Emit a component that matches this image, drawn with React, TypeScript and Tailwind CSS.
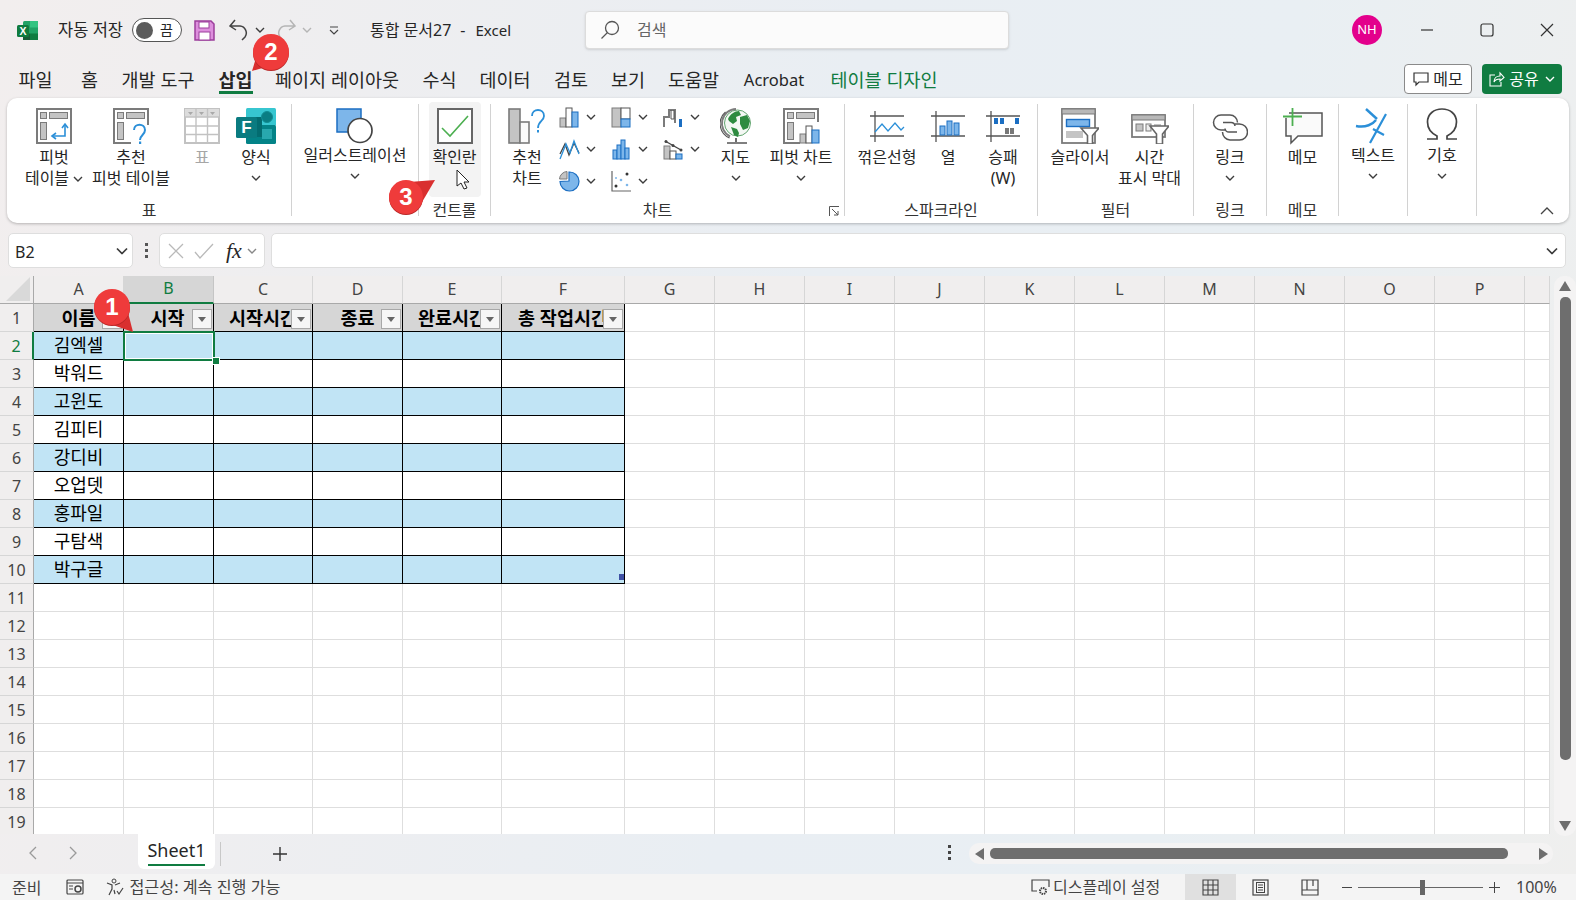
import type { ReactNode } from "react";

const GR = "#7b7b7b";
const LG = "#c4c4c4";
const BL = "#1b6ec2";
const LB = "#7db6ea";

function Chevron({ className = "", color = "#3c3c3c" }: { className?: string; color?: string }) {
  return (
    <svg width="10" height="6" viewBox="0 0 10 6" className={className}>
      <path d="M1 1l4 4 4-4" fill="none" stroke={color} strokeWidth="1.4" />
    </svg>
  );
}

function PivotBase({ extra, h = 36 }: { extra?: ReactNode; h?: number }) {
  return (
    <svg width="38" height={h} viewBox="0 0 38 36">
      <rect x="2" y="1" width="34" height="34" fill="#fff" stroke={GR} strokeWidth="2" />
      <rect x="5.5" y="4.5" width="6" height="6" fill={LG} stroke={GR} />
      <rect x="14.5" y="4.5" width="18" height="6" fill={LG} stroke={GR} />
      <rect x="5.5" y="14.5" width="6" height="17" fill={LG} stroke={GR} />
      {extra}
    </svg>
  );
}

function PivotIcon() {
  return (
    <PivotBase
      extra={
        <g fill="none" stroke="#2b8fd8" strokeWidth="1.6">
          <path d="M30 17v11H18" />
          <path d="M27 20l3-4 3 4M21 25l-4 3 4 3" />
        </g>
      }
    />
  );
}

function RecommendPivotIcon() {
  return (
    <PivotBase
      extra={
        <g>
          <rect x="19" y="17" width="19" height="19" fill="#fff" />
          <path d="M22 22c0-7 11-7 11 0 0 5-5 5-5 10" fill="none" stroke="#2b8fd8" strokeWidth="2" />
          <rect x="27" y="33.5" width="2.2" height="2.5" fill="#2b8fd8" />
        </g>
      }
    />
  );
}

function TableIcon() {
  return (
    <svg width="36" height="36" viewBox="0 0 36 36">
      <rect x="1" y="1" width="34" height="34" fill="#fff" stroke="#c2c2c2" strokeWidth="2" />
      <rect x="1" y="1" width="34" height="8" fill="#dcdcdc" />
      <path d="M12 1v34M23.500 1v34M1 9h34M1 18h34M1 26.500h34" stroke="#c2c2c2" strokeWidth="1.4" />
      <path d="M4 4h5l-2.500 3zM15 4h5l-2.500 3zM26 4h5l-2.500 3z" fill="#a9a9a9" />
    </svg>
  );
}

function FormsIcon() {
  return (
    <svg width="40" height="36" viewBox="0 0 40 36">
      <rect x="10" y="0" width="30" height="18" rx="1.500" fill="#37c6d0" />
      <rect x="10" y="17" width="30" height="19" rx="1.500" fill="#038387" />
      <rect x="10" y="9" width="16" height="20" fill="#036c70" />
      <circle cx="31" cy="9" r="5.500" fill="#0a7e83" stroke="#118d93" />
      <rect x="26" y="21" width="10" height="10" fill="#28a8ae" />
      <rect x="0" y="9" width="21" height="21" rx="1.500" fill="#0a7b80" />
      <text x="10.500" y="25" textAnchor="middle" fontSize="17" fontWeight="700" fill="#fff" fontFamily="Liberation Sans, sans-serif">F</text>
    </svg>
  );
}

function IllustrationIcon() {
  return (
    <svg width="38" height="36" viewBox="0 0 38 36">
      <rect x="1" y="1" width="24" height="23" fill={LB} stroke={BL} strokeWidth="1.500" />
      <circle cx="24" cy="22.500" r="12" fill="#fff" stroke="#444" strokeWidth="1.700" />
    </svg>
  );
}

function CheckIcon() {
  return (
    <svg width="36" height="36" viewBox="0 0 36 36">
      <rect x="1" y="1" width="34" height="34" fill="#fff" stroke="#666" strokeWidth="2" />
      <path d="M5 20l8 8L31 8" fill="none" stroke="#4caf50" strokeWidth="1.600" />
    </svg>
  );
}

function RecChartIcon() {
  return (
    <svg width="38" height="36" viewBox="0 0 38 36">
      <rect x="1" y="1" width="11" height="34" fill={LG} stroke={GR} strokeWidth="1.600" />
      <rect x="12" y="14" width="9" height="21" fill="#fafafa" stroke={GR} strokeWidth="1.600" />
      <path d="M24 8c0-8 12-8 12 0 0 5-6 5-6 12" fill="none" stroke="#2b8fd8" strokeWidth="1.800" />
      <rect x="29" y="22" width="2" height="2.500" fill="#2b8fd8" />
    </svg>
  );
}

const smallIcons: ReactNode[] = [
  <g key="1">
    <rect x="1" y="11" width="6" height="9" fill={LG} stroke={GR} />
    <rect x="7" y="1" width="6" height="19" fill="#fff" stroke="#555" />
    <rect x="13" y="5" width="6" height="15" fill={LB} stroke={BL} />
  </g>,
  <g key="2">
    <rect x="1" y="1" width="9" height="19" fill={LG} stroke={GR} />
    <rect x="10" y="1" width="9" height="11" fill="#fff" stroke="#555" />
    <rect x="10" y="12" width="9" height="8" fill={LB} stroke={BL} />
  </g>,
  <g key="3" fill="none">
    <path d="M1 20v-10h5V3h6v13" stroke={GR} strokeWidth="2" />
    <path d="M8 3v9h3V3" stroke="#555" />
    <rect x="16" y="12" width="3" height="8" fill={BL} />
  </g>,
  <g key="4" fill="none" strokeWidth="1.300">
    <path d="M1 15l5-10 4 11 5-12 5 10" stroke="#444" />
    <path d="M1 20l6-15 4 9 4-12 5 13" stroke="#2b8fd8" />
  </g>,
  <g key="5">
    <rect x="2" y="11" width="4" height="9" fill={LB} stroke={BL} />
    <rect x="6" y="6" width="4" height="14" fill={LB} stroke={BL} />
    <rect x="10" y="1" width="4" height="19" fill={LB} stroke={BL} />
    <rect x="14" y="9" width="4" height="11" fill={LB} stroke={BL} />
  </g>,
  <g key="6">
    <rect x="1" y="7" width="6" height="13" fill={LG} stroke={GR} />
    <rect x="7" y="12" width="6" height="8" fill="#fff" stroke="#555" />
    <rect x="13" y="15" width="6" height="5" fill={LB} stroke={BL} />
    <path d="M2 2l16 9" stroke="#444" strokeWidth="1.400" />
    <circle cx="3" cy="2.500" r="1.500" fill="#444" />
    <circle cx="10" cy="6.500" r="1.500" fill="#444" />
    <circle cx="18" cy="11" r="1.500" fill="#444" />
  </g>,
  <g key="7">
    <path d="M10 10V1a9.500 9.500 0 1 1-9 9.500z" fill={LB} stroke={BL} strokeWidth="1.200" />
    <path d="M8 8V0.500A8 8 0 0 0 0.500 8z" fill={LG} stroke={GR} />
  </g>,
  <g key="8">
    <path d="M1 0v20h19" fill="none" stroke="#666" strokeWidth="1.200" />
    <circle cx="5" cy="15" r="1.500" fill="#333" />
    <circle cx="16" cy="3" r="1.500" fill="#333" />
    <circle cx="5" cy="7" r="1" fill={LB} />
    <circle cx="10" cy="9" r="1.300" fill={LB} />
    <circle cx="16" cy="14" r="1.300" fill={LB} />
  </g>,
];

function GlobeIcon() {
  return (
    <svg width="32" height="37" viewBox="0 0 32 37">
      <circle cx="17.500" cy="15" r="13" fill="#f4f8f4" stroke="#3c8f4c" strokeWidth="0.800" />
      <path d="M8 11c2-5 7-8 11-8l2 4-5 2 1 4-4 3-4-3zM20 9l7-2 3 6-2 7-5 2-3-6zM11 19l6 2 2 4-1 4-4-2z" fill="#2e8b40" />
      <path d="M16 1A14.500 14.500 0 0 0 10 28.500" fill="none" stroke="#7d7d7d" strokeWidth="2" />
      <path d="M5.500 4a15.500 15.500 0 0 0 4 26" fill="none" stroke="#555" strokeWidth="1.100" />
      <path d="M16 30v4M7 35h20" stroke="#555" strokeWidth="1.700" />
    </svg>
  );
}

function PivotChartIcon() {
  return (
    <PivotBase
      extra={
        <g>
          <rect x="18" y="14" width="20" height="22" fill="#fff" />
          <rect x="18" y="26" width="6" height="9" fill={LG} stroke={GR} />
          <rect x="24" y="18" width="6" height="17" fill="#fff" stroke="#555" />
          <rect x="30" y="22" width="7" height="13" fill={LB} stroke={BL} />
        </g>
      }
    />
  );
}

function Spark({ children }: { children: ReactNode }) {
  return (
    <svg width="38" height="36" viewBox="0 0 38 36">
      <path d="M2 8h34M2 28h34M7 3v31" stroke="#555" strokeWidth="1.300" fill="none" />
      {children}
    </svg>
  );
}

function SlicerIcon() {
  return (
    <svg width="38" height="36" viewBox="0 0 38 36">
      <rect x="1" y="1" width="33" height="34" fill="#fff" stroke={GR} strokeWidth="1.800" />
      <rect x="1" y="1" width="33" height="5" fill="#b8b8b8" stroke={GR} />
      <rect x="5.500" y="11.500" width="23" height="7" fill={LB} stroke={BL} strokeWidth="1.400" />
      <rect x="5" y="23" width="17" height="7" fill={LG} />
      <path d="M20 20h18l-6.500 7.500V36h-5v-8.500z" fill="#fff" stroke="#666" strokeWidth="1.600" />
    </svg>
  );
}

function TimelineIcon() {
  return (
    <svg width="38" height="30" viewBox="0 0 38 30">
      <rect x="1" y="1" width="33" height="22" fill="#fff" stroke={GR} strokeWidth="1.800" />
      <rect x="1" y="1" width="33" height="5" fill="#b8b8b8" stroke={GR} />
      <rect x="5" y="10" width="7" height="7" fill={LG} stroke={GR} />
      <rect x="15" y="10" width="5" height="7" fill="#eee" stroke={GR} />
      <rect x="23" y="10" width="7" height="3" fill={LG} />
      <path d="M19 12h19l-6.500 8V30h-6V20z" fill="#fff" stroke="#666" strokeWidth="1.600" />
    </svg>
  );
}

function LinkIcon() {
  return (
    <svg width="36" height="30" viewBox="0 0 36 30">
      <path d="M13 17H9a7.500 7.500 0 0 1 0-15h9a7.500 7.500 0 0 1 7.500 7.500" fill="none" stroke="#555" strokeWidth="1.500" />
      <path d="M23 11h4.500a8 8 0 0 1 0 16H18a8 8 0 0 1-7.500-8" fill="none" stroke="#555" strokeWidth="1.500" />
      <path d="M11 9.500h8a4 4 0 0 1 4 3.500M25 19h-8a4 4 0 0 1-4-3.500" fill="none" stroke="#555" strokeWidth="1.500" />
    </svg>
  );
}

function CommentIcon() {
  return (
    <svg width="40" height="38" viewBox="0 0 40 38">
      <path d="M6 5h33v23H15l-7 7v-7H3V10" fill="#fafafa" stroke="#555" strokeWidth="1.500" />
      <path d="M0 8.500h19M9.500 0v18" stroke="#4caf50" strokeWidth="1.800" />
    </svg>
  );
}

function TextIcon() {
  return (
    <svg width="36" height="36" viewBox="0 0 36 36">
      <path d="M1 18c10 2 17-2 20-6" fill="none" stroke="#2b8fd8" strokeWidth="2.400" />
      <path d="M11 1l11 10" fill="none" stroke="#2b8fd8" strokeWidth="2.400" />
      <path d="M31 6L15 35M18 21l11 6" fill="none" stroke="#2b8fd8" strokeWidth="2.200" />
    </svg>
  );
}

function OmegaIcon() {
  return (
    <svg width="32" height="32" viewBox="0 0 32 32">
      <path
        d="M1 31h10v-3C5 25 1.500 20 1.500 14 1.500 6 8 1 16 1s14.500 5 14.500 13c0 6-3.500 11-9.500 14v3h10"
        fill="none"
        stroke="#444"
        strokeWidth="1.700"
      />
    </svg>
  );
}

type BtnProps = {
  w: number;
  icon: ReactNode;
  lines: string[];
  chevron?: "below" | "inline";
  disabled?: boolean;
  raised?: boolean;
};

function RibbonBtn({ w, icon, lines, chevron, disabled, raised }: BtnProps) {
  return (
    <div className="flex flex-col items-center" style={{ width: w }}>
      <div className="h-[36px] flex items-start justify-center">{icon}</div>
      <div
        className={`${raised ? "mt-[1px]" : "mt-[3px]"} text-center text-[16px] leading-[21px] whitespace-nowrap ${
          disabled ? "text-[#a6a6a6]" : "text-[#262626]"
        }`}
      >
        {lines.map((l, i) => (
          <div key={i} className="flex items-center justify-center">
            {l}
            {chevron === "inline" && i === lines.length - 1 && <Chevron className="ml-[4px]" />}
          </div>
        ))}
      </div>
      {chevron === "below" && <Chevron className={lines.length > 1 ? "mt-[6px]" : "mt-[7px]"} />}
    </div>
  );
}

function Group({
  w,
  label,
  pl = 0,
  center,
  launcher,
  children,
}: {
  w: number;
  label?: string;
  pl?: number;
  center?: boolean;
  launcher?: boolean;
  children: ReactNode;
}) {
  return (
    <div className="h-[112px] mt-[6px] shrink-0 flex flex-col border-r border-[#d2d2d2]" style={{ width: w }}>
      <div className={`flex-1 flex pt-[4px] ${center ? "justify-center" : ""}`} style={{ paddingLeft: pl }}>
        {children}
      </div>
      <div className={`relative h-[14px] leading-[16px] text-center text-[16px] text-[#333] ${launcher ? "pr-[20px]" : ""}`}>
        {label}
        {launcher && (
          <svg width="10" height="10" viewBox="0 0 10 10" className="absolute right-[5px] top-[4px]">
            <path d="M0.500 10V0.500H10M3 3l6 6M9 5v4H5" fill="none" stroke="#555" strokeWidth="1" />
          </svg>
        )}
      </div>
    </div>
  );
}

function SmallChart({ i }: { i: number }) {
  return (
    <div className="h-[32px] w-[52px] flex items-center pl-[7px] gap-[6px]">
      <svg width="21" height="21" viewBox="0 0 21 21">
        {smallIcons[i]}
      </svg>
      <Chevron />
    </div>
  );
}

const ribbonTabs: [string, number][] = [
  ["파일", 57],
  ["홈", 51],
  ["개발 도구", 86],
  ["삽입", 69],
  ["페이지 레이아웃", 134],
  ["수식", 71],
  ["데이터", 60],
  ["검토", 72],
  ["보기", 42],
  ["도움말", 89],
  ["Acrobat", 72],
  ["테이블 디자인", 148],
];

const colLetters = ["A", "B", "C", "D", "E", "F", "G", "H", "I", "J", "K", "L", "M", "N", "O", "P", ""];
const headers = ["이름", "시작", "시작시간", "종료", "완료시간", "총 작업시간"];
const names = ["김엑셀", "박워드", "고윈도", "김피티", "강디비", "오업뎃", "홍파일", "구탐색", "박구글"];
const rowNums = Array.from({ length: 19 }, (_, i) => i + 1);
const gridCols =
  "grid grid-cols-[34px_90px_90px_99px_90px_99px_123px_90px_90px_90px_90px_90px_90px_90px_90px_90px_90px_25px] auto-rows-[28px]";

function HeaderCell({ text, col }: { text: string; col: number }) {
  return (
    <div className="relative overflow-hidden bg-[#d6d6d6] border-r border-b border-black flex items-center justify-center font-bold text-[18.5px] text-black whitespace-nowrap">
      <span className={col === 1 ? "pr-[2px]" : ""}>{text}</span>
      <span className="absolute right-[1px] top-[5px] w-[20px] h-[20px] bg-[#f6f6f6] border border-[#a8a8a8] flex items-center justify-center">
        <svg width="8" height="5" viewBox="0 0 8 5">
          <path d="M0 0h8L4 5z" fill="#666" />
        </svg>
      </span>
    </div>
  );
}

function Sheet() {
  return (
    <div className={`${gridCols} relative w-[1550px] h-[558px] overflow-hidden bg-white content-start`}>
      <div className="bg-[#f0eeee] border-r border-b border-[#a9a9a9] relative">
        <svg width="24" height="24" viewBox="0 0 24 24" className="absolute right-[3px] bottom-[2px]">
          <path d="M24 0v24H0z" fill="#d9d9d9" />
        </svg>
      </div>
      {colLetters.map((c, i) => (
        <div
          key={i}
          className={`flex items-center justify-center text-[16px] pb-[2px] border-r ${
            i === 1
              ? "bg-[#d6d6d6] text-[#107c41] border-[#c5c5c5] border-b-2 border-b-[#107c41]"
              : "bg-[#f0eeee] text-[#444] border-[#d6d6d6] border-b border-b-[#a9a9a9]"
          }`}
        >
          {c}
        </div>
      ))}
      {rowNums.map((r) => (
        <div key={r} className="contents">
          <div
            className={`flex items-center justify-center bg-[#f0eeee] text-[16px] border-b border-[#d6d6d6] ${
              r === 2 ? "text-[#107c41] border-r-2 border-r-[#107c41]" : "text-[#444] border-r border-r-[#a9a9a9]"
            }`}
          >
            {r}
          </div>
          {colLetters.map((_, c) => {
            if (c < 6 && r === 1) return <HeaderCell key={c} text={headers[c]} col={c} />;
            if (c < 6 && r <= 10) {
              return (
                <div
                  key={c}
                  className={`flex items-center justify-center text-[18px] text-black border-r border-b border-black ${
                    r % 2 === 0 ? "bg-[#c1e4f5]" : "bg-white"
                  }`}
                >
                  {c === 0 ? names[r - 2] : ""}
                </div>
              );
            }
            return <div key={c} className="border-r border-b border-[#dedede]" />;
          })}
        </div>
      ))}
      {/* selected cell B2 */}
      <div className="absolute left-[123px] top-[55px] w-[92px] h-[30px] border-2 border-[#107c41] outline outline-1 -outline-offset-3 outline-white" />
      <div className="absolute left-[212px] top-[81px] w-[6px] h-[6px] bg-[#107c41] border border-white box-content" />
      {/* table resize handle */}
      <div className="absolute left-[619px] top-[298px] w-[5px] h-[6px] bg-[#3f51a5]" />
    </div>
  );
}

function Callout({ n, tail, left, top, size = 36 }: { n: number; tail: string; left: number; top: number; size?: number }) {
  return (
    <div className="absolute" style={{ left, top, width: 60, height: 60 }}>
      <svg width="60" height="60" viewBox="0 0 60 60" className="absolute left-0 top-0">
        <path d={tail} fill="#d92f2f" />
        <circle cx="30" cy="31" r={size / 2} fill="#b92626" />
        <circle cx="30" cy="30" r={size / 2} fill="#ef3b3b" />
      </svg>
      <div className="absolute inset-0 flex items-center justify-center text-white font-bold text-[24px] font-['Liberation_Sans',sans-serif]">
        {n}
      </div>
    </div>
  );
}

export default function App() {
  return (
    <div className="relative w-[1576px] h-[900px] overflow-hidden flex flex-col text-[#262626] font-['Noto_Sans','Noto_Sans_CJK_KR',sans-serif] bg-[linear-gradient(100deg,#f2eeee_0%,#e9eef3_50%,#e9eff3_75%,#efefee_100%)]">
      {/* title bar */}
      <div className="h-[60px] shrink-0 flex items-center relative">
        <svg width="21" height="21" viewBox="0 0 21 21" className="ml-[17px]">
          <rect x="6" y="1" width="15" height="19" rx="1.500" fill="#21a366" />
          <rect x="13" y="1" width="8" height="6.500" fill="#33c481" />
          <rect x="13" y="13.500" width="8" height="6.500" fill="#107c41" />
          <rect x="6" y="13.500" width="7" height="6.500" fill="#185c37" />
          <rect x="0" y="5" width="12" height="12" rx="1.500" fill="#0f7b3f" />
          <text x="6" y="14.500" textAnchor="middle" fontSize="10.500" fontWeight="700" fill="#fff" fontFamily="Liberation Sans, sans-serif">X</text>
        </svg>
        <span className="ml-[20px] w-[65px] text-[16.5px] whitespace-nowrap">자동 저장</span>
        <div className="ml-[9px] w-[50px] h-[24px] rounded-full border border-[#555] bg-white flex items-center pl-[3px]">
          <span className="w-[17px] h-[17px] rounded-full bg-[#5c5c5c]" />
          <span className="ml-[7px] text-[14px] leading-none">끔</span>
        </div>
        <svg width="21" height="21" viewBox="0 0 21 21" className="ml-[12px]">
          <path d="M1 1h16l3 3v16H1z" fill="#dd8fdd" stroke="#9c3f9c" strokeWidth="1.500" />
          <rect x="5" y="2" width="10" height="6" fill="#fff" stroke="#9c3f9c" />
          <rect x="5" y="12" width="11" height="8" fill="#fff" stroke="#9c3f9c" />
        </svg>
        <svg width="20" height="22" viewBox="0 0 20 22" className="ml-[14px]">
          <path d="M6 1L1 7l6 4M1 7h10a7 7 0 0 1 5 11l-3 3" fill="none" stroke="#444" strokeWidth="1.500" />
        </svg>
        <Chevron className="ml-[6px]" />
        <svg width="20" height="22" viewBox="0 0 20 22" className="ml-[11px]">
          <path d="M14 1l5 6-6 4M19 7H9a7 7 0 0 0-5 11l3 3" fill="none" stroke="#b5b5b5" strokeWidth="1.500" />
        </svg>
        <Chevron className="ml-[6px]" color="#b5b5b5" />
        <svg width="10" height="9" viewBox="0 0 10 9" className="ml-[17px]">
          <path d="M1 1h8M1 4l4 4 4-4" fill="none" stroke="#444" strokeWidth="1.200" />
        </svg>
        <span className="ml-[31px] text-[16px] whitespace-nowrap">통합 문서27</span>
        <span className="ml-[9px] text-[16px]">-</span>
        <span className="ml-[10px] text-[15px]">Excel</span>
        <div className="absolute left-[585px] top-[11px] w-[424px] h-[38px] bg-[#fbfbfb] border border-[#dcdcdc] rounded-[4px] shadow-sm flex items-center pl-[14px]">
          <svg width="20" height="20" viewBox="0 0 20 20">
            <circle cx="12" cy="8" r="6.500" fill="none" stroke="#555" strokeWidth="1.300" />
            <path d="M7.500 12.500L1.500 18.500" stroke="#555" strokeWidth="1.300" />
          </svg>
          <span className="ml-[17px] text-[16px] text-[#666]">검색</span>
        </div>
        <div className="ml-auto mr-[194px] w-[30px] h-[30px] rounded-full bg-[#e3008c] text-white text-[13px] flex items-center justify-center">
          NH
        </div>
        <svg width="14" height="14" viewBox="0 0 14 14" className="absolute left-[1420px] top-[23px]">
          <path d="M1 7h12" stroke="#333" strokeWidth="1.200" />
        </svg>
        <svg width="14" height="14" viewBox="0 0 14 14" className="absolute left-[1480px] top-[23px]">
          <rect x="1" y="1" width="12" height="12" rx="2" fill="none" stroke="#333" strokeWidth="1.200" />
        </svg>
        <svg width="14" height="14" viewBox="0 0 14 14" className="absolute left-[1540px] top-[23px]">
          <path d="M1 1l12 12M13 1L1 13" stroke="#333" strokeWidth="1.200" />
        </svg>
      </div>

      {/* tabs */}
      <div className="h-[38px] shrink-0 flex items-start pl-[7px] relative">
        {ribbonTabs.map(([t, w]) => (
          <div
            key={t}
            className={`relative shrink-0 h-[36px] flex items-center justify-center leading-none whitespace-nowrap pt-[4px] ${
              t === "Acrobat" ? "text-[16.5px]" : "text-[18.5px]"
            } ${t === "삽입" ? "font-bold" : ""} ${t === "테이블 디자인" ? "text-[#107c41]" : "text-[#262626]"}`}
            style={{ width: w }}
          >
            {t}
            {t === "삽입" && <span className="absolute left-[18px] right-[17px] bottom-[2px] h-[3px] bg-[#107c41]" />}
          </div>
        ))}
        <div className="absolute left-[1404px] top-[4px] w-[68px] h-[30px] rounded-[4px] bg-white border border-[#8a8a8a] flex items-center justify-center gap-[4px] text-[16px]">
          <svg width="16" height="16" viewBox="0 0 16 16">
            <path d="M1 2h14v9H6l-3 3v-3H1z" fill="none" stroke="#333" strokeWidth="1.200" />
          </svg>
          메모
        </div>
        <div className="absolute left-[1482px] top-[4px] w-[80px] h-[30px] rounded-[4px] bg-[#107c41] text-white flex items-center justify-center gap-[4px] text-[16px]">
          <svg width="16" height="16" viewBox="0 0 16 16">
            <path d="M6 4H1v11h11v-4M5 11c0-4 3-6 6-6V2l4 4.500L11 10V8c-3 0-5 1-6 3z" fill="none" stroke="#fff" strokeWidth="1.100" />
          </svg>
          공유
          <Chevron color="#fff" className="ml-[2px]" />
        </div>
      </div>

      {/* ribbon */}
      <div className="mx-[7px] h-[125px] shrink-0 bg-white rounded-[10px] shadow-[0_1px_3px_rgba(0,0,0,0.25)] flex">
        <Group w={285} label="표" pl={9}>
          <RibbonBtn w={76} icon={<PivotIcon />} lines={["피벗", "테이블"]} chevron="inline" />
          <RibbonBtn w={78} icon={<RecommendPivotIcon />} lines={["추천", "피벗 테이블"]} />
          <RibbonBtn w={64} icon={<TableIcon />} lines={["표"]} disabled />
          <RibbonBtn w={44} icon={<FormsIcon />} lines={["양식"]} chevron="below" />
        </Group>
        <Group w={127} center>
          <RibbonBtn w={120} icon={<IllustrationIcon />} lines={["일러스트레이션"]} chevron="below" raised />
        </Group>
        <Group w={72} label="컨트롤" center>
          <div className="-mt-[6px] h-[95px] w-[52px] pt-[6px] bg-[#f3f3f3] rounded-[4px] flex justify-center">
            <RibbonBtn w={52} icon={<CheckIcon />} lines={["확인란"]} />
          </div>
        </Group>
        <Group w={354} label="차트" pl={14} launcher>
          <RibbonBtn w={44} icon={<RecChartIcon />} lines={["추천", "차트"]} />
          <div className="-mt-[7px] ml-[3px] grid grid-cols-[52px_52px_52px] auto-rows-[32px] w-[156px]">
            {[0, 1, 2, 3, 4, 5, 6, 7].map((i) => (
              <SmallChart key={i} i={i} />
            ))}
          </div>
          <RibbonBtn w={55} icon={<GlobeIcon />} lines={["지도"]} chevron="below" />
          <RibbonBtn w={76} icon={<PivotChartIcon />} lines={["피벗 차트"]} chevron="below" />
        </Group>
        <Group w={193} label="스파크라인" pl={12}>
          <RibbonBtn
            w={60}
            lines={["꺾은선형"]}
            icon={
              <Spark>
                <path d="M7 24l7-8 6 7 7-8 6 7 3-3" fill="none" stroke="#2b8fd8" strokeWidth="1.300" />
              </Spark>
            }
          />
          <RibbonBtn
            w={62}
            lines={["열"]}
            icon={
              <Spark>
                <g fill={LB} stroke={BL}>
                  <rect x="11" y="18" width="5" height="9" />
                  <rect x="18" y="13" width="5" height="14" />
                  <rect x="25" y="15" width="5" height="12" />
                </g>
              </Spark>
            }
          />
          <RibbonBtn
            w={48}
            lines={["승패", "(W)"]}
            icon={
              <Spark>
                <g fill={BL}>
                  <rect x="10" y="10" width="4" height="6" />
                  <rect x="16" y="10" width="4" height="6" />
                  <rect x="31" y="10" width="4" height="6" />
                </g>
                <g fill="#777">
                  <rect x="21" y="20" width="4" height="6" />
                  <rect x="26" y="20" width="4" height="6" />
                </g>
              </Spark>
            }
          />
        </Group>
        <Group w={156} label="필터" pl={8}>
          <RibbonBtn w={68} icon={<SlicerIcon />} lines={["슬라이서"]} />
          <RibbonBtn w={71} icon={<div className="pt-[6px]"><TimelineIcon /></div>} lines={["시간", "표시 막대"]} />
        </Group>
        <Group w={73} label="링크" center>
          <RibbonBtn w={60} icon={<div className="pt-[5px]"><LinkIcon /></div>} lines={["링크"]} chevron="below" />
        </Group>
        <Group w={72} label="메모" center>
          <RibbonBtn w={60} icon={<CommentIcon />} lines={["메모"]} />
        </Group>
        <Group w={69} center>
          <RibbonBtn w={60} icon={<TextIcon />} lines={["텍스트"]} chevron="below" raised />
        </Group>
        <Group w={69} center>
          <RibbonBtn w={60} icon={<OmegaIcon />} lines={["기호"]} chevron="below" raised />
        </Group>
        <div className="flex-1 flex items-end justify-end pr-[15px] pb-[8px]">
          <svg width="14" height="8" viewBox="0 0 14 8">
            <path d="M1 7l6-6 6 6" fill="none" stroke="#444" strokeWidth="1.300" />
          </svg>
        </div>
      </div>

      {/* formula bar */}
      <div className="h-[35px] mt-[10px] shrink-0 flex pl-[8px] pr-[10px]">
        <div className="w-[125px] bg-white border border-[#dedede] rounded-[5px] flex items-center justify-between pl-[6px] pr-[5px] text-[16px]">
          <span className="pt-[3px]">B2</span>
          <Chevron className="scale-125" />
        </div>
        <div className="w-[26px] flex flex-col items-center justify-center gap-[3px]">
          <span className="w-[3px] h-[3px] bg-[#555]" />
          <span className="w-[3px] h-[3px] bg-[#555]" />
          <span className="w-[3px] h-[3px] bg-[#555]" />
        </div>
        <div className="w-[106px] bg-white border border-[#dedede] rounded-[5px] flex items-center pl-[8px]">
          <svg width="16" height="16" viewBox="0 0 16 16">
            <path d="M1 1l14 14M15 1L1 15" stroke="#b9b9b9" strokeWidth="1.300" />
          </svg>
          <svg width="20" height="16" viewBox="0 0 20 16" className="ml-[10px]">
            <path d="M1 9l5 6L19 1" fill="none" stroke="#b9b9b9" strokeWidth="1.300" />
          </svg>
          <span className="ml-[12px] italic text-[22px] leading-none font-['Liberation_Serif',serif]">fx</span>
          <Chevron className="ml-[5px]" color="#888" />
        </div>
        <div className="flex-1 ml-[6px] bg-white border border-[#dedede] rounded-[5px] flex items-center justify-end pr-[8px]">
          <Chevron className="scale-125" />
        </div>
      </div>

      {/* sheet + vertical scrollbar */}
      <div className="mt-[8px] h-[558px] shrink-0 flex">
        <Sheet />
        <div className="ml-[4px] w-[22px] h-[560px] rounded-[10px] bg-[#f4f3f3] flex flex-col items-center pt-[5px]">
          <svg width="12" height="10" viewBox="0 0 12 10">
            <path d="M6 0l6 10H0z" fill="#6e6e6e" />
          </svg>
          <div className="mt-[6px] w-[11px] h-[463px] rounded-[5px] bg-[#6e6e6e]" />
          <svg width="12" height="10" viewBox="0 0 12 10" className="mt-[61px]">
            <path d="M6 10L12 0H0z" fill="#6e6e6e" />
          </svg>
        </div>
      </div>

      {/* sheet tabs */}
      <div className="h-[40px] shrink-0 flex items-start relative">
        <svg width="10" height="14" viewBox="0 0 10 14" className="ml-[28px] mt-[12px]">
          <path d="M8 1L2 7l6 6" fill="none" stroke="#9a9a9a" strokeWidth="1.300" />
        </svg>
        <svg width="10" height="14" viewBox="0 0 10 14" className="ml-[30px] mt-[12px]">
          <path d="M2 1l6 6-6 6" fill="none" stroke="#9a9a9a" strokeWidth="1.300" />
        </svg>
        <div className="ml-[60px] relative w-[77px] h-[35px] bg-white rounded-b-[6px] flex items-start justify-center text-[18px] pt-[4px] leading-[24px]">
          Sheet1
          <span className="absolute left-[10px] right-[10px] bottom-[3px] h-[2px] bg-[#107c41]" />
        </div>
        <span className="ml-[5px] mt-[8px] w-px h-[24px] bg-[#c8c8c8]" />
        <svg width="16" height="16" viewBox="0 0 16 16" className="ml-[51px] mt-[12px]">
          <path d="M8 1v14M1 8h14" stroke="#333" strokeWidth="1.400" />
        </svg>
        <div className="absolute left-[948px] top-[11px] flex flex-col gap-[3px]">
          <span className="w-[3px] h-[3px] bg-[#444]" />
          <span className="w-[3px] h-[3px] bg-[#444]" />
          <span className="w-[3px] h-[3px] bg-[#444]" />
        </div>
        <div className="absolute left-[969px] top-[9px] w-[584px] h-[21px] rounded-[10px] bg-[#f4f3f3] flex items-center pl-[6px]">
          <svg width="9" height="12" viewBox="0 0 9 12">
            <path d="M0 6l9-6v12z" fill="#6e6e6e" />
          </svg>
          <div className="ml-[6px] w-[518px] h-[11px] rounded-[5px] bg-[#6e6e6e]" />
          <svg width="9" height="12" viewBox="0 0 9 12" className="ml-[31px]">
            <path d="M9 6L0 0v12z" fill="#6e6e6e" />
          </svg>
        </div>
      </div>

      {/* status bar */}
      <div className="h-[26px] shrink-0 bg-[#f4f4f4] flex items-center text-[16px] text-[#444] relative">
        <span className="ml-[12px] pt-[1px]">준비</span>
        <svg width="18" height="16" viewBox="0 0 18 16" className="ml-[25px]">
          <rect x="1" y="1" width="16" height="14" rx="1" fill="none" stroke="#444" strokeWidth="1.200" />
          <path d="M1 4h16M3 7h4M3 10h4" stroke="#444" />
          <circle cx="12" cy="10" r="3" fill="none" stroke="#444" strokeWidth="1.500" />
        </svg>
        <svg width="18" height="18" viewBox="0 0 18 18" className="ml-[22px]">
          <circle cx="8" cy="3" r="2" fill="none" stroke="#444" />
          <path d="M1 5l5 2v4l-3 6M14 5l-5 2M8 12l1 4M11 13l2 3 4-6" fill="none" stroke="#444" strokeWidth="1.200" />
        </svg>
        <span className="ml-[5px] pt-[1px] text-[16.2px] whitespace-nowrap">접근성: 계속 진행 가능</span>
        <svg width="19" height="17" viewBox="0 0 19 17" className="absolute left-[1031px] top-[5px]">
          <path d="M6 12H1V1h17v7" fill="none" stroke="#444" strokeWidth="1.200" />
          <circle cx="12" cy="12" r="3" fill="none" stroke="#444" strokeWidth="2" strokeDasharray="1.500 0.800" />
        </svg>
        <span className="absolute left-[1053px] top-[1px] whitespace-nowrap">디스플레이 설정</span>
        <div className="absolute left-[1185px] top-0 w-[51px] h-[26px] bg-[#e0e0e0] flex items-center justify-center">
          <svg width="17" height="17" viewBox="0 0 17 17">
            <path d="M1 1h15v15H1zM1 6h15M1 11h15M6 1v15M11 1v15" fill="none" stroke="#444" strokeWidth="1.100" />
          </svg>
        </div>
        <svg width="17" height="17" viewBox="0 0 17 17" className="absolute left-[1252px] top-[5px]">
          <rect x="1" y="1" width="15" height="15" fill="none" stroke="#444" strokeWidth="1.200" />
          <rect x="4.500" y="3.500" width="8" height="10" fill="none" stroke="#444" />
          <path d="M6 6h5M6 8.500h5M6 11h5" stroke="#444" />
        </svg>
        <svg width="18" height="17" viewBox="0 0 18 17" className="absolute left-[1301px] top-[5px]">
          <path d="M1 1h16v15H1zM1 11h16M6 1v10M12 1v6" fill="none" stroke="#444" strokeWidth="1.200" />
        </svg>
        <span className="absolute left-[1342px] top-[13px] w-[10px] h-px bg-[#444]" />
        <span className="absolute left-[1358px] top-[13px] w-[125px] h-px bg-[#666]" />
        <span className="absolute left-[1420px] top-[6px] w-[5px] h-[15px] bg-[#666]" />
        <svg width="11" height="11" viewBox="0 0 11 11" className="absolute left-[1489px] top-[8px]">
          <path d="M5.500 0v11M0 5.500h11" stroke="#444" />
        </svg>
        <span className="absolute left-[1516px] top-[1px] whitespace-nowrap">100%</span>
      </div>

      {/* callouts and pointer */}
      <Callout n={1} left={82} top={277} tail="M22 45L51 55 42 20z" />
      <Callout n={2} left={241} top={22} tail="M20 20L11 49 42 40z" />
      <Callout n={3} left={376} top={167} size={34} tail="M20 16L59 13 42 42z" />
      <svg width="16" height="22" viewBox="0 0 16 22" className="absolute left-[456px] top-[169px]">
        <path d="M1 1v16l4-3 3 6 3-1-3-6h5z" fill="#fff" stroke="#222" strokeWidth="1" />
      </svg>
    </div>
  );
}
